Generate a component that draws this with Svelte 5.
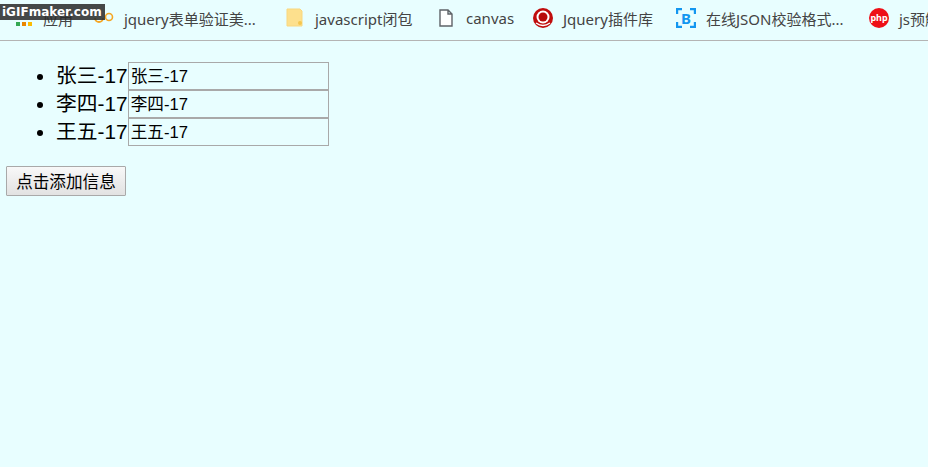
<script>
  let people = [
    { name: "张三", age: 17 },
    { name: "李四", age: 17 },
    { name: "王五", age: 17 },
  ];
  const marks = [
    { label: "jquery表单验证美...", icon: "loop", w: 141 },
    { label: "javascript闭包", icon: "folder", w: 101 },
    { label: "canvas", icon: "file", w: 47 },
    { label: "Jquery插件库", icon: "q", w: 93 },
    { label: "在线JSON校验格式...", icon: "b", w: 143 },
    { label: "js预解析", icon: "php", w: 60 },
  ];
  const addPerson = () => {
    people = [...people, { name: "赵六", age: 17 }];
  };
</script>

<div class="page">
  <div class="bookmarks">
    <div class="mark apps">
      <svg width="16" height="16" viewBox="0 0 16 16">
        <rect x="0" y="12" width="4" height="4" fill="#34a853" />
        <rect x="6" y="12" width="4" height="4" fill="#ea8600" />
        <rect x="12" y="12" width="4" height="4" fill="#fbbc04" />
      </svg>
      <span>应用</span>
    </div>
    {#each marks as m}
      <div class="mark">
        <svg width="20" height="20" viewBox="0 0 20 20">
          {#if m.icon === "loop"}
            <circle cx="15" cy="9" r="3.500" fill="none" stroke="#f5a623" stroke-width="1.600" />
            <path d="M1 10a4 4 0 0 0 8 0" fill="none" stroke="#f5a623" stroke-width="1.800" />
          {:else if m.icon === "folder"}
            <path d="M2 1h13l2 2v15H2z" fill="#fde08d" stroke="#f9d77e" />
            <circle cx="15" cy="15" r="2" fill="#f5c64f" />
          {:else if m.icon === "file"}
            <path d="M4 2h8l4 4v12H4z M12 2v4h4" fill="#fff" stroke="#5f6368" stroke-width="1.400" />
          {:else if m.icon === "q"}
            <circle cx="10" cy="10" r="10" fill="#c00d0d" />
            <circle cx="10" cy="9" r="6.500" fill="#fff" />
            <circle cx="10" cy="9" r="4.500" fill="#b80b0b" />
            <path d="M3 15q7 5 14 0" fill="none" stroke="#fff" stroke-width="1.400" />
          {:else if m.icon === "b"}
            <path d="M1 6V1h5M14 1h5v5M19 14v5h-5M6 19H1v-5" fill="none" stroke="#1296f0" stroke-width="2.400" />
            <text x="10" y="15.500" text-anchor="middle" class="b">B</text>
          {:else}
            <circle cx="10" cy="10" r="10" fill="#ee0f17" />
            <text x="10" y="13" text-anchor="middle" class="php">php</text>
          {/if}
        </svg>
        <span style="width: {m.w}px">{m.label}</span>
      </div>
    {/each}
  </div>

  <ul>
    {#each people as p}
      <li>{p.name}-{p.age}<input type="text" value="{p.name}-{p.age}" /></li>
    {/each}
  </ul>

  <button on:click={addPerson}>点击添加信息</button>

  <div class="watermark">iGIFmaker.com</div>
</div>

<style>
  :global(body) {
    background: #e8feff;
  }
  .page {
    font-family: "Liberation Sans", "Noto Sans CJK SC", sans-serif;
    min-height: 467px;
    overflow: hidden;
    position: relative;
  }
  .bookmarks {
    display: flex;
    align-items: center;
    gap: 20px;
    height: 36px;
    padding: 0 0 4px 16px;
    border-bottom: 1px solid #b4b4b4;
    white-space: nowrap;
    overflow: hidden;
    font-family: "Noto Sans", "Noto Sans CJK SC", sans-serif;
  }
  .mark {
    display: flex;
    align-items: center;
    gap: 10px;
    flex-shrink: 0;
    font-size: 15px;
    color: #444;
  }
  .apps {
    gap: 11px;
  }
  .apps span {
    width: 31px;
  }
  .php {
    font-size: 9px;
    font-weight: bold;
    fill: #fff;
  }
  .b {
    font-size: 15px;
    font-weight: bold;
    fill: #1296f0;
  }
  ul {
    margin: 21px 0 20px;
    padding-left: 56px;
    font-size: 20.8px;
    line-height: 28px;
    color: #000;
  }
  input {
    width: 195px;
    height: 24px;
    padding: 2px 2px 0;
    border: 1px solid #a9a9a9;
    background: transparent;
    font: inherit;
    font-size: 16.64px;
    color: #000;
    vertical-align: top;
    margin: 0;
  }
  button {
    display: block;
    margin-left: 6px;
    width: 120px;
    height: 30px;
    padding: 0;
    font: inherit;
    font-size: 16.64px;
    color: #000;
    border: 1px solid #a9a9a9;
    border-radius: 1px;
    background: linear-gradient(#f8f8f8, #e2e2e2);
  }
  .watermark {
    position: absolute;
    top: 4px;
    left: 0;
    width: 105px;
    height: 16px;
    background: rgba(40, 40, 40, 0.85);
    color: #fff;
    font-family: "DejaVu Sans", sans-serif;
    font-size: 12px;
    font-weight: bold;
    line-height: 16px;
    padding-left: 2px;
    box-sizing: border-box;
    white-space: nowrap;
    overflow: hidden;
  }
</style>
